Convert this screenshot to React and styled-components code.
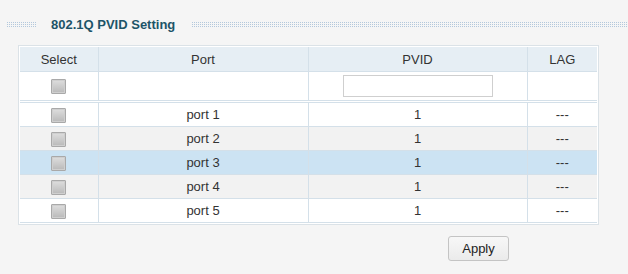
import React from 'react';
import styled, { createGlobalStyle } from 'styled-components';

const ports = [1, 2, 3, 4, 5];

const GlobalStyle = createGlobalStyle`
  html, body {
    margin: 0;
    padding: 0;
    background: #f5f5f5;
    font-family: "Liberation Sans", Arial, sans-serif;
  }
`;

const Page = styled.div`
  width: 628px;
  height: 274px;
  padding-top: 15px;
  box-sizing: border-box;
`;

const TitleBar = styled.div`
  display: flex;
  align-items: center;
  height: 18px;
  padding-left: 7px;
`;

const Dots = styled.div`
  height: 5px;
  width: ${(p) => p.width || 'auto'};
  flex: ${(p) => (p.grow ? 1 : 'none')};
  background:
    linear-gradient(to bottom, transparent 1px, #f5f5f5 1px) 0 0 / 2px 2px,
    linear-gradient(to right, #b3c8dc 1px, transparent 1px) 0 0 / 2px 2px;
  margin-top: 1px;
`;

const Title = styled.div`
  font-size: 13px;
  font-weight: bold;
  color: #1d5468;
  padding: 0 17px 0 15px;
`;

const TableFrame = styled.div`
  margin: 12px 0 0 18px;
  width: 578px;
  border: 1px solid #dbe2e7;
  padding: 1px 0 1px 1px;
  background: #fff;
`;

const Table = styled.table`
  width: 577px;
  border-collapse: collapse;
  table-layout: fixed;
  font-size: 13px;
  color: #333;
`;

const Head = styled.th`
  height: 24px;
  background: #e6eef4;
  font-weight: normal;
  border-right: 1px solid #d4e0e9;
  border-bottom: 1px solid #d4e0e9;
  text-align: center;
  padding: 0;
  &:last-child {
    border-right: none;
  }
`;

const Row = styled.tr`
  background: ${(p) => p.bg || '#fff'};
`;

const Cell = styled.td`
  height: ${(p) => p.h || '23px'};
  border-right: 1px solid #d4e0e9;
  border-bottom: ${(p) => (p.double ? '3px double #d4e0e9' : '1px solid #d4e0e9')};
  text-align: center;
  padding: 0;
  &:last-child {
    border-right: none;
  }
`;

const Check = styled.span`
  display: inline-block;
  width: 13px;
  height: 13px;
  vertical-align: middle;
  border: 1px solid #a9a9a9;
  border-radius: 1px;
  background: linear-gradient(to bottom, #dedede, #b9b9b9);
  box-shadow: inset 0 0 0 1px #cfcfcf;
`;

const PvidInput = styled.input`
  display: block;
  margin: 0 auto;
  width: 150px;
  height: 22px;
  box-sizing: border-box;
  border: 1px solid #cfcfcf;
  background: #fff;
  outline: none;
`;

const Footer = styled.div`
  display: flex;
  padding: 11px 0 0 448px;
`;

const ApplyButton = styled.button`
  width: 61px;
  height: 25px;
  font-family: "Liberation Sans", Arial, sans-serif;
  font-size: 13px;
  color: #222;
  background: linear-gradient(to bottom, #f7f7f7, #ebebeb);
  border: 1px solid #c4c4c4;
  border-radius: 3px;
  padding: 0;
`;

const rowBg = (n) => (n === 3 ? '#cce3f3' : n % 2 === 0 ? '#f2f2f2' : '#fff');

export default function App() {
  return (
    <Page>
      <GlobalStyle />
      <TitleBar>
        <Dots width="29px" />
        <Title>802.1Q PVID Setting</Title>
        <Dots grow />
      </TitleBar>
      <TableFrame>
        <Table>
          <colgroup>
            <col style={{ width: 78 }} />
            <col style={{ width: 210 }} />
            <col style={{ width: 219 }} />
            <col />
          </colgroup>
          <thead>
            <tr>
              <Head>Select</Head>
              <Head>Port</Head>
              <Head>PVID</Head>
              <Head>LAG</Head>
            </tr>
          </thead>
          <tbody>
            <Row>
              <Cell h="28px" double>
                <Check />
              </Cell>
              <Cell h="28px" double />
              <Cell h="28px" double>
                <PvidInput />
              </Cell>
              <Cell h="28px" double />
            </Row>
            {ports.map((n) => (
              <Row key={n} bg={rowBg(n)}>
                <Cell>
                  <Check />
                </Cell>
                <Cell>port {n}</Cell>
                <Cell>1</Cell>
                <Cell>---</Cell>
              </Row>
            ))}
          </tbody>
        </Table>
      </TableFrame>
      <Footer>
        <ApplyButton>Apply</ApplyButton>
      </Footer>
    </Page>
  );
}
